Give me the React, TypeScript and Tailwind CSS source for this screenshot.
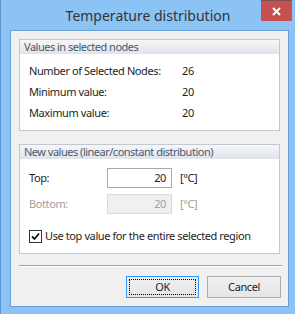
import React, { useState } from 'react';

const font = { fontFamily: '"Noto Sans", "Open Sans", sans-serif' };

const GroupBox: React.FC<{ title: string; className?: string; children: React.ReactNode }> = ({
  title,
  className,
  children,
}) => (
  <div className={`border border-[#c2c7d0] bg-white ${className ?? ''}`}>
    <div className="h-[14px] whitespace-nowrap bg-gradient-to-b from-[#f6f7f9] to-[#dfe3ea] pl-[4px] text-[11px] leading-[14px] tracking-[-0.5px] text-[#4a5a70]">
      {title}
    </div>
    {children}
  </div>
);

const InfoRow: React.FC<{ label: string; value: string }> = ({ label, value }) => (
  <div className="flex h-[21px] items-center whitespace-nowrap">
    <span className="w-[153px]">{label}</span>
    <span>{value}</span>
  </div>
);

const App: React.FC = () => {
  const [useTop, setUseTop] = useState(true);

  return (
    <div
      className="flex h-[314px] w-[295px] flex-col border-l border-[#5d93cc] bg-[#8cc3f5] text-[11px] tracking-[-0.4px] text-[#1e1e1e]"
      style={font}
    >
      {/* title bar */}
      <div className="flex h-[30px] items-start">
        <div className="flex h-[30px] flex-1 items-center justify-center pl-[34px] text-[14px] tracking-normal text-[#333]">
          Temperature distribution
        </div>
        <button className="mr-[3px] flex h-[21px] w-[31px] items-center justify-center border-t border-[#7d5050] bg-[#c75050] text-white">
          <svg width="9" height="9" viewBox="0 0 9 9">
            <path d="M1 1L8 8M8 1L1 8" stroke="white" strokeWidth="2" />
          </svg>
        </button>
      </div>

      {/* client area */}
      <div className="ml-[9px] flex h-[277px] w-[279px] flex-col border border-[#6c9ed6] bg-[#f0f0f0] px-[8px] pt-[8px]">
        <GroupBox title="Values in selected nodes" className="h-[92px]">
          <div className="pl-[9px] pt-[7px]">
            <InfoRow label="Number of Selected Nodes:" value="26" />
            <InfoRow label="Minimum value:" value="20" />
            <InfoRow label="Maximum value:" value="20" />
          </div>
        </GroupBox>

        <GroupBox title="New values (linear/constant distribution)" className="mt-[13px] h-[110px]">
          <div className="pl-[9px] pt-[9px]">
            <div className="flex h-[20px] items-center">
              <span className="w-[78px]">Top:</span>
              <div className="flex h-[20px] w-[65px] items-center justify-end border border-[#a9a9a9] bg-white pr-[5px]">
                20
              </div>
              <span className="ml-[8px]">[°C]</span>
            </div>
            <div className="mt-[6px] flex h-[20px] items-center text-[#a0a0a0]">
              <span className="w-[78px]">Bottom:</span>
              <div className="flex h-[20px] w-[65px] items-center justify-end border border-[#d9d9d9] bg-[#f0f0f0] pr-[5px]">
                20
              </div>
              <span className="ml-[8px]">[°C]</span>
            </div>
            <label className="mt-[15px] flex h-[14px] cursor-default items-center whitespace-nowrap">
              <span
                className="flex h-[13px] w-[13px] shrink-0 items-center justify-center border border-[#333] bg-white"
                onClick={() => setUseTop(!useTop)}
              >
                {useTop && (
                  <svg width="9" height="9" viewBox="0 0 9 9">
                    <path d="M1 4.5L3.5 7L8 1.5" stroke="#111" strokeWidth="1.8" fill="none" />
                  </svg>
                )}
              </span>
              <span className="ml-[3px]">Use top value for the entire selected region</span>
            </label>
          </div>
        </GroupBox>

        {/* separator */}
        <div className="mt-[11px] h-[2px] w-[263px] border-t border-b border-t-[#a0a0a0] border-b-white" />

        {/* buttons */}
        <div className="mt-[9px] flex justify-end gap-[8px]">
          <button className="flex h-[22px] w-[73px] items-center justify-center border border-[#3399ff] bg-gradient-to-b from-[#f0f0f0] to-[#e5e5e5] p-[2px]">
            <span className="flex h-full w-full items-center justify-center border border-dotted border-black">
              OK
            </span>
          </button>
          <button className="mr-[-1px] flex h-[22px] w-[74px] items-center justify-center border border-[#acacac] bg-gradient-to-b from-[#f0f0f0] to-[#e5e5e5]">
            Cancel
          </button>
        </div>
      </div>
    </div>
  );
};

export default App;
